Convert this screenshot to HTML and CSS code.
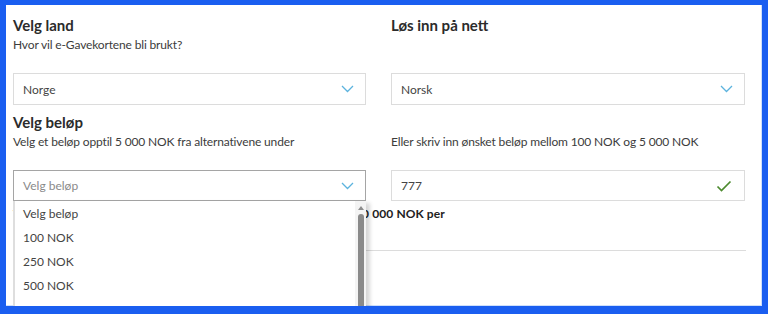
FILE: index.html
```html
<!DOCTYPE html>
<html lang="no">
<head>
<meta charset="UTF-8" />
<meta name="viewport" content="width=device-width, initial-scale=1" />
<title>Kjøp e-Gavekort</title>
<link rel="stylesheet" href="styles.css">
</head>
<body>
  <div class="frame">
    <div class="page">

      <div class="row heads">
        <div>
          <h2>Velg land</h2>
          <p class="sub">Hvor vil e-Gavekortene bli brukt?</p>
        </div>
        <div>
          <h2>Løs inn på nett</h2>
        </div>
      </div>

      <div class="row fields">
        <div class="field">
          <span>Norge</span>
          <svg class="chev" width="13" height="8" viewBox="0 0 13 8"><path d="M1 1l5.5 5.5L12 1" fill="none" stroke="#5cb3de" stroke-width="1.3"/></svg>
        </div>
        <div class="field">
          <span>Norsk</span>
          <svg class="chev" width="13" height="8" viewBox="0 0 13 8"><path d="M1 1l5.5 5.5L12 1" fill="none" stroke="#5cb3de" stroke-width="1.3"/></svg>
        </div>
      </div>

      <div class="row heads second">
        <div>
          <h2>Velg beløp</h2>
          <p class="sub">Velg et beløp opptil 5 000 NOK fra alternativene under</p>
        </div>
        <div>
          <p class="sub">Eller skriv inn ønsket beløp mellom 100 NOK og 5 000 NOK</p>
        </div>
      </div>

      <div class="row fields">
        <div class="select-wrap">
          <div class="field focus">
            <span class="placeholder">Velg beløp</span>
            <svg class="chev" width="13" height="8" viewBox="0 0 13 8"><path d="M1 1l5.5 5.5L12 1" fill="none" stroke="#5cb3de" stroke-width="1.3"/></svg>
          </div>
          <div class="dropdown">
            <ul class="options">
              <li>Velg beløp</li>
              <li>100 NOK</li>
              <li>250 NOK</li>
              <li>500 NOK</li>
              <li>750 NOK</li>
            </ul>
            <div class="scrollbar">
              <span class="arrow"></span>
              <span class="thumb"></span>
            </div>
          </div>
        </div>
        <div class="field">
          <span>777</span>
          <svg class="check" width="16" height="12" viewBox="0 0 16 12"><path d="M1.5 6.5l4 4L14.5 1.5" fill="none" stroke="#4c8a2e" stroke-width="1.7"/></svg>
        </div>
      </div>

      <p class="note">Vær oppmerksom på at du maksimalt kan kjøpe e-Gavekort for 10 000 NOK per</p>
      <hr class="divider">

    </div>
  </div>
</body>
</html>
```

FILE: styles.css
```css
html, body {
  margin: 0;
  padding: 0;
  height: 100%;
  overflow: hidden;
  font-family: Lato, "Noto Sans", sans-serif;
  background: #1a5ef0;
}

.frame {
  box-sizing: border-box;
  height: 314px;
  border-style: solid;
  border-color: #1a5ef0;
  border-width: 5px 6px 8px 6px;
  background: #fff;
  box-shadow: inset -1px -1px 0 #cfe0fb;
  overflow: hidden;
}

.page {
  padding: 9px 16px 0 7px;
  color: #3a3a3a;
}

.row {
  display: grid;
  grid-template-columns: 353px 354px;
  column-gap: 25px;
}

.heads {
  height: 59px;
}

.heads.second {
  height: 65px;
  align-items: end;
}

h2 {
  margin: 0;
  font-size: 15px;
  font-weight: 700;
  line-height: 22px;
  color: #2b2b2b;
}

.sub {
  margin: 0;
  font-size: 12px;
  letter-spacing: -0.15px;
  line-height: 18px;
  color: #3c3c3c;
}

.heads.second .sub {
  margin-bottom: 19px;
}

.field {
  box-sizing: border-box;
  height: 32px;
  border: 1px solid #dcdcdc;
  display: flex;
  align-items: center;
  justify-content: space-between;
  padding: 0 10px 0 9px;
  font-size: 12px;
  color: #444;
  background: #fff;
}

.select-wrap .field,
.fields:last-of-type > .field {
  height: 31px;
}

.field.focus {
  border-color: #a5a5a5;
}

.placeholder {
  color: #8a8a8a;
}

.chev {
  margin-right: 1px;
}

.check {
  margin-right: 2px;
}

.select-wrap {
  position: relative;
}

.dropdown {
  position: absolute;
  top: 31px;
  left: 0;
  width: 353px;
  height: 140px;
  box-sizing: border-box;
  background: #fff;
  border-left: 2px solid #dedede;
  box-shadow: 4px 2px 4px rgba(0, 0, 0, 0.16);
  display: flex;
  z-index: 5;
}

.options {
  list-style: none;
  margin: 0;
  padding: 1px 0 0 8px;
  flex: 1;
}

.options li {
  height: 24px;
  line-height: 24px;
  font-size: 12px;
  color: #444;
}

.scrollbar {
  width: 11px;
  background: #f4f4f4;
  display: flex;
  flex-direction: column;
  align-items: center;
  padding-top: 5px;
}

.arrow {
  width: 0;
  height: 0;
  border-left: 3px solid transparent;
  border-right: 3px solid transparent;
  border-bottom: 4px solid #8c8c8c;
}

.thumb {
  margin-top: 4px;
  width: 6px;
  flex: 1;
  border-radius: 3px;
  background: #8a8a8a;
}

.note {
  margin: 5px 0 0;
  font-size: 12px;
  font-weight: 700;
  letter-spacing: 0.1px;
  line-height: 16px;
  color: #222;
}

.divider {
  margin: 28px 0 0;
  border: 0;
  border-top: 1px solid #dcdcdc;
}
```
